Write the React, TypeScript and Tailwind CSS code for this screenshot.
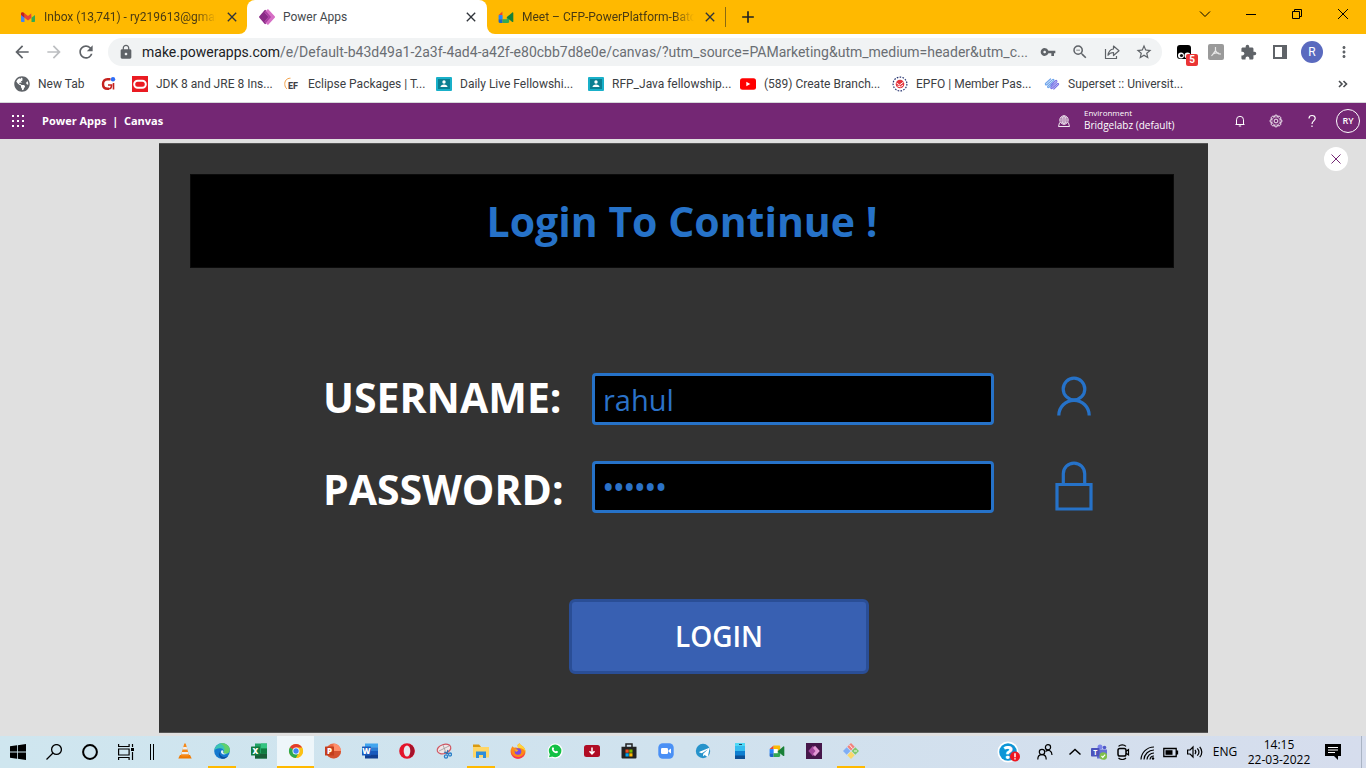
import { useState } from "react";
import type { ReactNode } from "react";
import {
  MdAdd,
  MdArrowBack,
  MdArrowForward,
  MdClose,
  MdExtension,
  MdLock,
  MdMoreVert,
  MdRefresh,
  MdStarBorder,
  MdVpnKey,
  MdZoomOut,
} from "react-icons/md";
import { FaGlobeAmericas, FaTelegramPlane } from "react-icons/fa";

/* ---------- shared logos ---------- */

function GmailLogo() {
  return (
    <svg viewBox="0 0 16 16" className="size-4 shrink-0" aria-hidden="true">
      <path d="M1 4v8.200c0 .5.4.8.8.8H4.500V6.800z" fill="#4285f4" />
      <path d="M15 4v8.200c0 .5-.4.8-.8.8h-2.700V6.800z" fill="#34a853" />
      <path d="M4.500 8.800V4.300L8 7l3.500-2.700v4.500L8 11.400z" fill="#ea4335" />
      <path d="M1 4.300v1.600l3.500 2.900V4.300l-1-.8C2.500 2.800 1 3.300 1 4.300z" fill="#c5221f" />
      <path d="M15 4.300v1.600l-3.500 2.900V4.300l1-.8c1-.7 2.500-.2 2.500.8z" fill="#fbbc04" />
    </svg>
  );
}

function PowerAppsLogo({ className }: { className: string }) {
  return (
    <svg viewBox="0 0 16 16" className={className} aria-hidden="true">
      <path d="M5.500 1.200a.9.900 0 0 1 1.300 0L10 8l-3.200 6.800a.9.900 0 0 1-1.300 0L.4 8.700a1 1 0 0 1 0-1.400z" fill="#8a2b86" />
      <path d="M8.200.5a.9.900 0 0 1 1.300 0l6.200 6.800a1 1 0 0 1 0 1.400l-6.200 6.800a.9.900 0 0 1-1.300 0L5.500 12.500 9.500 8l-4-4.500z" fill="#d66fc5" />
      <path d="M6.800 2 12 8l-5.200 6-1.300-1.500L9.500 8l-4-4.500z" fill="#a83fa1" />
    </svg>
  );
}

function MeetShapes() {
  return (
    <>
      <path d="M4.600 2.400v3.700H.6z" fill="#ea4335" />
      <path d="M4.600 2.400H10c.7 0 1.200.4 1.200 1.100v3l-2.400 2V6.100H4.600z" fill="#fbbc04" />
      <path d="M.6 6.100h4v4.200h-4z" fill="#2684fc" />
      <path d="M.6 10.300h4v3.600H1.800c-.7 0-1.200-.5-1.200-1.100z" fill="#1a66ca" />
      <path d="M4.600 10.300h4.200V8.200l2.400-2v6.600c0 .7-.5 1.100-1.200 1.100H4.600z" fill="#34a853" />
      <path d="M8.800 8.200 14.300 3.500c.5-.4 1-.1 1 .5v8.400c0 .6-.5.9-1 .5L8.800 8.400z" fill="#188038" />
    </>
  );
}

/* ---------- browser ---------- */

function CloseTab({ label }: { label: string }) {
  return (
    <button aria-label={`Close ${label}`} className="flex size-4 shrink-0 items-center justify-center text-[#30343a]">
      <MdClose className="size-4" />
    </button>
  );
}

function TabStrip() {
  return (
    <div className="flex h-[34px] items-stretch bg-white">
      <div className="flex w-[247px] shrink-0 items-center gap-2 rounded-br-lg bg-[#ffb900] pr-[7px] pl-5">
        <GmailLogo />
        <span className="min-w-0 flex-1 overflow-hidden whitespace-nowrap text-[#4a3b12] [mask-image:linear-gradient(to_right,black_88%,transparent)]">
          Inbox (13,741) - ry219613@gmai
        </span>
        <CloseTab label="Inbox" />
      </div>
      <div className="w-60 shrink-0 bg-[#ffb900]">
        <div className="flex h-full items-center gap-2 rounded-t-lg bg-white pr-2 pl-3">
          <PowerAppsLogo className="size-4 shrink-0" />
          <span className="flex-1 text-[#45494d]">Power Apps</span>
          <CloseTab label="Power Apps" />
        </div>
      </div>
      <div className="flex flex-1 items-center rounded-bl-lg bg-[#ffb900]">
        <div className="flex h-5 w-[239px] items-center gap-2 border-r border-[#8a6a10] pr-[7px] pl-[11px]">
          <svg viewBox="0 0 16 16" className="size-4 shrink-0" aria-hidden="true">
            <MeetShapes />
          </svg>
          <span className="min-w-0 flex-1 overflow-hidden whitespace-nowrap text-[#4a3b12] [mask-image:linear-gradient(to_right,black_88%,transparent)]">
            Meet – CFP-PowerPlatform-Batch
          </span>
          <CloseTab label="Meet" />
        </div>
        <button aria-label="New tab" className="ml-3 text-[#222]">
          <MdAdd className="size-5" />
        </button>
        <div className="ml-auto flex h-7 self-start text-black">
          <button aria-label="Search tabs" className="flex w-[46px] items-center justify-center">
            <svg viewBox="0 0 12 12" className="size-3" fill="none" stroke="currentColor">
              <path d="m1 3.500 5 5 5-5" />
            </svg>
          </button>
          <button aria-label="Minimize" className="flex w-[46px] items-center justify-center">
            <svg viewBox="0 0 10 10" className="size-2.5" stroke="currentColor">
              <path d="M0 5.500h10" />
            </svg>
          </button>
          <button aria-label="Restore" className="flex w-[46px] items-center justify-center">
            <svg viewBox="0 0 10 10" className="size-2.5" fill="none" stroke="currentColor">
              <path d="M.5 2.500h7v7h-7zM2.500 2.500v-2h7v7h-2" />
            </svg>
          </button>
          <button aria-label="Close window" className="flex w-[46px] items-center justify-center">
            <svg viewBox="0 0 10 10" className="size-2.5" fill="none" stroke="currentColor">
              <path d="m0 0 10 10M10 0 0 10" />
            </svg>
          </button>
        </div>
      </div>
    </div>
  );
}

function ToolButton({ label, children }: { label: string; children: ReactNode }) {
  return (
    <button aria-label={label} className="flex size-8 shrink-0 items-center justify-center text-[#5f6368]">
      {children}
    </button>
  );
}

function Toolbar() {
  return (
    <div className="flex h-9 items-center bg-white px-1.5">
      <ToolButton label="Back">
        <MdArrowBack className="size-5" />
      </ToolButton>
      <ToolButton label="Forward">
        <MdArrowForward className="size-5 text-[#bcbec1]" />
      </ToolButton>
      <ToolButton label="Reload">
        <MdRefresh className="size-5" />
      </ToolButton>
      <div className="ml-1.5 flex h-7 min-w-0 flex-1 items-center rounded-full bg-[#f1f3f4] pr-0.5 pl-2.5">
        <MdLock className="size-4 shrink-0 text-[#5f6368]" />
        <p className="ml-2 min-w-0 flex-1 overflow-hidden text-sm whitespace-nowrap text-[#6a6e73]">
          <span className="text-[#202124]">make.powerapps.com</span>
          /e/Default-b43d49a1-2a3f-4ad4-a42f-e80cbb7d8e0e/canvas/?utm_source=PAMarketing&amp;utm_medium=header&amp;utm_c...
        </p>
        <ToolButton label="Saved passwords">
          <MdVpnKey className="size-4" />
        </ToolButton>
        <ToolButton label="Zoom">
          <MdZoomOut className="size-[18px]" />
        </ToolButton>
        <ToolButton label="Share">
          <svg viewBox="0 0 16 16" className="size-4" fill="none" stroke="currentColor" strokeWidth="1.200">
            <path d="M1.500 5v9.500h11V12M9.500 5V2l5.500 4.800-5.500 4.700V8.500c-2.500 0-4.300.8-5.500 2.800C4.500 7.500 6.500 5.300 9.500 5z" strokeLinejoin="round" />
          </svg>
        </ToolButton>
        <ToolButton label="Bookmark this page">
          <MdStarBorder className="size-[18px]" />
        </ToolButton>
      </div>
      <div className="ml-1.5 flex">
        <button aria-label="Tampermonkey, 5 scripts" className="relative flex size-8 items-center justify-center">
          <svg viewBox="0 0 16 16" className="size-4">
            <rect x="1" y="1" width="14" height="14" rx="3" fill="#000" />
            <circle cx="5" cy="11.500" r="3" fill="#fff" />
            <circle cx="11.500" cy="11.500" r="3" fill="#fff" />
            <circle cx="5.500" cy="11.500" r="1.600" fill="#111" />
          </svg>
          <span className="absolute right-0.5 bottom-0.5 flex size-3 items-center justify-center rounded-xs bg-[#ea3535] text-[10px] font-bold text-white">
            5
          </span>
        </button>
        <ToolButton label="Acrobat">
          <svg viewBox="0 0 16 16" className="size-4">
            <rect width="16" height="16" rx="2" fill="#9a9a9a" />
            <path d="M7.500 3v3.500L3.500 12M7.500 6.500c1 2.500 2.500 3.500 5.500 3.500M5 10c2-1.500 3.500-1.500 6-1" fill="none" stroke="#e8e8e8" strokeWidth="1.200" />
          </svg>
        </ToolButton>
        <ToolButton label="Extensions">
          <MdExtension className="size-[17px]" />
        </ToolButton>
        <ToolButton label="Side panel">
          <svg viewBox="0 0 14 14" className="size-3.5" fill="none">
            <path d="M1 1h12v12H1z" stroke="currentColor" strokeWidth="2" />
            <path d="M9 1h4v12H9z" fill="currentColor" />
          </svg>
        </ToolButton>
        <ToolButton label="Profile">
          <span className="flex size-[22px] items-center justify-center rounded-full bg-[#5a6abf] text-xs text-white">R</span>
        </ToolButton>
        <ToolButton label="Chrome menu">
          <MdMoreVert className="size-[18px]" />
        </ToolButton>
      </div>
    </div>
  );
}

function ClassroomLogo() {
  return (
    <svg viewBox="0 0 16 16" className="size-4 shrink-0">
      <rect y="1" width="16" height="14" rx="1" fill="#19b0c9" />
      <rect x="2" y="3" width="12" height="10" fill="#0b7f92" />
      <circle cx="8" cy="6" r="1.700" fill="#fff" />
      <path d="M4.500 11c0-1.800 1.500-2.600 3.500-2.600s3.500.8 3.500 2.600z" fill="#fff" />
    </svg>
  );
}

const bookmarks: { title: string; icon: ReactNode }[] = [
  {
    title: "JDK 8 and JRE 8 Ins...",
    icon: (
      <svg viewBox="0 0 16 16" className="size-4 shrink-0">
        <rect width="16" height="16" fill="#ea1b22" />
        <rect x="2.200" y="4.700" width="11.600" height="7" rx="3.500" fill="none" stroke="#fff" strokeWidth="2" />
      </svg>
    ),
  },
  {
    title: "Eclipse Packages | T...",
    icon: (
      <svg viewBox="0 0 16 16" className="size-4 shrink-0">
        <path d="M6.500 2.200C2.500 2.200.5 5 .8 8.500c.1 2 1 3.500 2.200 4.500" fill="none" stroke="#f3a24a" strokeWidth="1" />
        <text x="4" y="13" fontSize="9" fontWeight="800" fill="#3f3f46">
          EF
        </text>
      </svg>
    ),
  },
  { title: "Daily Live Fellowshi...", icon: <ClassroomLogo /> },
  { title: "RFP_Java fellowship...", icon: <ClassroomLogo /> },
  {
    title: "(589) Create Branch...",
    icon: (
      <svg viewBox="0 0 16 16" className="size-4 shrink-0">
        <rect y="2.300" width="16" height="11.400" rx="2.500" fill="#f00" />
        <path d="M6.300 5.700v4.600L10.300 8z" fill="#fff" />
      </svg>
    ),
  },
  {
    title: "EPFO | Member Pas...",
    icon: (
      <svg viewBox="0 0 16 16" className="size-4 shrink-0">
        <circle cx="8" cy="8" r="6.900" fill="none" stroke="#25336f" strokeWidth="1.200" strokeDasharray="1.600 1.300" />
        <circle cx="8" cy="8" r="4.300" fill="#e5343c" />
        <path d="m4.500 7 3 2 4-3M5.500 10l3 .8L11 9" stroke="#fff" strokeWidth="1" fill="none" />
      </svg>
    ),
  },
  {
    title: "Superset :: Universit...",
    icon: (
      <svg viewBox="0 0 16 16" className="size-4 shrink-0" fill="none" strokeWidth="1.200" strokeLinecap="round" strokeLinejoin="round">
        <path d="M6.500 3 1.800 7.200c-1 1 0 2.300 1 1.500L8.500 3.600c1-.8 2 .4 1 1.300L4 10c-1 1 0 2 1 1.200l4-3.700" stroke="#6fa5ec" />
        <path d="m7 9 4.500-4.200c1-.8 2 .3 1 1.300L7.200 11c-1 1 0 2.200 1 1.300l5-4.600c1-.8 2 .2 1 1.200L9.800 13" stroke="#7b74e6" />
      </svg>
    ),
  },
];

function BookmarksBar() {
  return (
    <nav aria-label="Bookmarks" className="flex h-[33px] items-center border-b border-[#d6d6da] bg-white pb-1 pl-3.5 text-[#3c4043]">
      <a href="#new-tab" className="flex w-[86px] shrink-0 items-center gap-2 whitespace-nowrap">
        <FaGlobeAmericas className="size-4 shrink-0 text-[#5f6368]" />
        New Tab
      </a>
      <a href="#c" aria-label="CodinGame" className="w-8 shrink-0">
        <svg viewBox="0 0 16 16" className="size-4" fill="none">
          <path d="M10.500 3.200H7.500C4.500 3.200 3 5 3 8s1.500 4.800 4.500 4.800H9" stroke="#c5221f" strokeWidth="2.400" />
          <path d="M8 9h3.500c0 2.500-.8 3.800-2.500 3.800M13.500 7v6.500" stroke="#c5221f" strokeWidth="1.600" />
          <circle cx="13" cy="3.200" r="2.200" fill="#2f6df6" />
        </svg>
      </a>
      {bookmarks.map((b) => (
        <a key={b.title} href="#bookmark" className="flex w-38 shrink-0 items-center gap-2 whitespace-nowrap">
          {b.icon}
          {b.title}
        </a>
      ))}
      <button aria-label="More bookmarks" className="mr-4.5 ml-auto">
        <svg viewBox="0 0 10 8" className="h-2 w-2.5" fill="none" stroke="#4a4d51" strokeWidth="1.600">
          <path d="m1 1 3 3-3 3M5.500 1l3 3-3 3" />
        </svg>
      </button>
    </nav>
  );
}

/* ---------- Power Apps ---------- */

const petals = [0, 45, 90, 135, 180, 225, 270, 315];

function AppHeader() {
  const dots = [0, 1, 2].flatMap((r) => [0, 1, 2].map((c) => [c * 5, r * 5]));
  return (
    <header className="flex h-9 items-center bg-[#742774] text-white">
      <button aria-label="App launcher" className="flex w-9 items-center justify-center">
        <svg viewBox="0 0 12 12" className="size-3" fill="currentColor">
          {dots.map(([x, y]) => (
            <rect key={`${x}-${y}`} x={x} y={y} width="2" height="2" />
          ))}
        </svg>
      </button>
      <h1 className="ml-1.5 text-[11px] font-bold whitespace-pre">Power Apps  |  Canvas</h1>
      <div className="ml-auto flex w-40 items-center gap-2">
        <svg viewBox="0 0 12 12" className="size-3" fill="none" stroke="currentColor" strokeWidth=".9">
          <circle cx="6" cy="5" r="4.200" />
          <path d="M6 .8v8.400M1.800 5h8.400M2.500 3h7M2.500 7h7" strokeWidth=".7" />
          <ellipse cx="6" cy="5" rx="2" ry="4.200" strokeWidth=".7" />
          <path d="M1.600 7.500.5 11.500h11l-1.100-4" />
        </svg>
        <div className="px-1.5">
          <p className="text-[8px] leading-2">Environment</p>
          <p className="text-[10px] leading-4">Bridgelabz (default)</p>
        </div>
      </div>
      <div className="ml-1 flex items-center">
        <button aria-label="Notifications" className="flex w-9 justify-center">
          <svg viewBox="0 0 12 12" className="size-3" fill="none" stroke="currentColor">
            <path d="M2.500 9.500V4.800a3.500 3.500 0 0 1 7 0v4.700M1.500 9.500h9M4.800 11h2.400" />
          </svg>
        </button>
        <button aria-label="Settings" className="flex w-9 justify-center">
          <svg viewBox="0 0 14 14" className="size-3.5" fill="none" stroke="currentColor" strokeWidth=".9">
            <circle cx="7" cy="7" r="1.900" />
            <circle cx="7" cy="7" r="4.200" strokeWidth=".6" />
            {petals.map((angle) => (
              <path key={angle} d="M5.200 2.900C5 .400 9 .400 8.800 2.900" transform={`rotate(${angle} 7 7)`} />
            ))}
          </svg>
        </button>
        <button aria-label="Help" className="flex w-9 justify-center">
          <svg viewBox="0 0 10 14" className="h-3.5 w-2.5" fill="none" stroke="currentColor" strokeWidth="1.200">
            <path d="M2 4.500C2 2.500 3.200 1.500 5 1.500s3.200 1 3.200 2.800C8.200 6.800 5 7 5 10M5 11.500V13" />
          </svg>
        </button>
        <button
          aria-label="Account"
          className="mx-1.5 flex size-6 items-center justify-center rounded-full border border-white text-[9px] font-semibold"
        >
          RY
        </button>
      </div>
    </header>
  );
}

function LoginApp() {
  const [user, setUser] = useState("rahul");
  const [password, setPassword] = useState("secret");
  return (
    <main className="flex flex-1 flex-col bg-[#e0e0e0] pt-1 pr-[158px] pb-[3px] pl-[159px]">
      <form
        onSubmit={(e) => e.preventDefault()}
        className="flex flex-1 flex-col border-y border-[#555] bg-[#333] pt-[30px]"
      >
        <h2 className="mr-[34px] ml-[31px] flex h-[94px] items-center justify-center border border-[#0b0b0b] bg-black text-[41px] font-bold text-[#2672c8]">
          Login To Continue !
        </h2>
        <div className="mt-[105px] grid grid-cols-[301px_1fr_160px] items-center gap-y-9 pr-[54px] pl-[132px]">
          <label htmlFor="username" className="pb-1 pl-8 text-[41px] leading-12 font-bold text-white">
            USERNAME:
          </label>
          <input
            id="username"
            value={user}
            onChange={(e) => setUser(e.target.value)}
            className="h-[52px] w-full rounded border-3 border-[#2672c8] bg-black px-2 text-[29px] text-[#2b72c8] outline-none"
          />
          <svg viewBox="0 0 40 52" className="h-[52px] w-10 justify-self-center" fill="none" stroke="#2672c8" strokeWidth="3.200">
            <circle cx="20" cy="16" r="10.800" />
            <path d="M4.800 42.500a15.200 15.200 0 0 1 30.400 0" />
          </svg>
          <label htmlFor="password" className="pt-1 pl-8 text-[41px] leading-12 font-bold text-white">
            PASSWORD:
          </label>
          <input
            id="password"
            type="password"
            value={password}
            onChange={(e) => setPassword(e.target.value)}
            className="h-[52px] w-full rounded border-3 border-[#2672c8] bg-black px-2 text-[28px] font-semibold text-[#2b72c8] outline-none"
          />
          <svg viewBox="0 0 40 52" className="h-[52px] w-10 justify-self-center" fill="none" stroke="#2672c8" strokeWidth="3.200">
            <path d="M3 23.500h34V48H3zM9.300 24V12.800a10.700 10.700 0 0 1 21.400 0V24" />
          </svg>
        </div>
        <button
          type="submit"
          className="mt-[86px] mr-[339px] ml-[410px] h-[75px] rounded-md border-3 border-[#2a4e96] bg-[#3860b2] text-[28px] font-semibold text-white"
        >
          LOGIN
        </button>
      </form>
    </main>
  );
}

/* ---------- Windows taskbar ---------- */

const taskIcons: { name: string; open?: boolean; active?: boolean; icon: ReactNode }[] = [
  {
    name: "VLC",
    icon: (
      <>
        <path d="M3 12h10l1.700 3.500H1.300z" fill="#f07a00" />
        <path d="M7.300.5h1.400l3.500 12.200c-2 1.200-6.400 1.200-8.400 0z" fill="#f58a1a" />
        <path d="M6.300 4h3.400l.7 2.500H5.600zM4.900 9h6.200l.6 2.200H4.300z" fill="#eee" />
      </>
    ),
  },
  {
    name: "Edge",
    open: true,
    icon: (
      <>
        <circle cx="8" cy="8" r="7.800" fill="#1479cf" />
        <path d="M.3 7.500C.8 3.500 4 .2 8 .2c4.500 0 7.800 3 7.800 6.500 0 2.500-2 4-4.300 4-1.500 0-2.300-.6-2-1.200.8-1.300.2-4-3-4.300C3.500 5 .8 6 .3 7.500z" fill="#3cc4b4" />
        <path d="M9 .3c4 .5 6.800 3.200 6.800 6.400 0 2.500-2 4-4.300 4-1.500 0-2-.5-2-1.200C12 6 10 2 6 .6 7 .2 8 .2 9 .3z" fill="#62d06a" />
        <path d="M5.500 8.500c-.5 3 2 6 6 5.500 1-.1 2.300-.8 3-1.500-1.500 2.500-4 3.500-6.500 3.300C5.500 14.500 4 11 5.500 8.500z" fill="#0b4f9e" />
        <path d="M9.300 8c.3 1-.5 1.300 0 1.900.5.7 2 1 3.200.7-2.500 2-6 .5-5.500-2C7.300 7 9 7 9.300 8z" fill="#dff1f8" />
      </>
    ),
  },
  {
    name: "Excel",
    icon: (
      <>
        <path d="M4 .5h12v15H4z" fill="#21a366" />
        <path d="M10 .5h6v5h-6z" fill="#33c481" />
        <path d="M4 10.500h12v5H4z" fill="#185c37" />
        <path d="M10 5.500h6v5h-6z" fill="#107c41" />
        <rect y="3.500" width="9" height="9" rx=".6" fill="#107c41" />
        <text x="4.500" y="11" fontSize="8" fontWeight="800" textAnchor="middle" fill="#fff">
          X
        </text>
      </>
    ),
  },
  {
    name: "Chrome",
    active: true,
    icon: (
      <>
        <circle cx="8" cy="8" r="7" fill="#fbc116" />
        <path d="M8 8 1.900 4.500A7 7 0 0 1 14.100 4.500z" fill="#e33b2e" />
        <path d="M1.900 4.500A7 7 0 0 0 8 15l3-5.500L8 8z" fill="#2da94f" />
        <path d="M8 4.500h6.100A7 7 0 0 1 8 15l3-5.300z" fill="#fbc116" />
        <circle cx="8" cy="8" r="3.500" fill="#fff" />
        <circle cx="8" cy="8" r="2.700" fill="#4285f4" />
      </>
    ),
  },
  {
    name: "PowerPoint",
    icon: (
      <>
        <circle cx="8.500" cy="8" r="7.500" fill="#ed6c47" />
        <path d="M8.500.5A7.500 7.500 0 0 1 16 8H8.500z" fill="#ff8f6b" />
        <path d="M16 8a7.500 7.500 0 0 1-14.500 2.500L8.500 8z" fill="#d35230" />
        <rect y="3.500" width="9" height="9" rx=".6" fill="#c43e1c" />
        <text x="4.500" y="11" fontSize="8" fontWeight="800" textAnchor="middle" fill="#fff">
          P
        </text>
      </>
    ),
  },
  {
    name: "Word",
    icon: (
      <>
        <path d="M3 .5h13v4H3z" fill="#41a5ee" />
        <path d="M3 4.300h13V8H3z" fill="#2b7cd3" />
        <path d="M3 8h13v4H3z" fill="#185abd" />
        <path d="M3 11.800h13v3.700H3z" fill="#103f91" />
        <rect y="3.500" width="9" height="9" rx=".6" fill="#185abd" />
        <text x="4.500" y="11" fontSize="8" fontWeight="800" textAnchor="middle" fill="#fff">
          W
        </text>
      </>
    ),
  },
  {
    name: "Opera",
    icon: (
      <>
        <circle cx="8" cy="8" r="7.800" fill="#e3142a" />
        <path d="M11 1.500a7 7 0 0 1 0 13z" fill="#a5122a" />
        <ellipse cx="8" cy="8" rx="3.300" ry="5.600" fill="#e4e9ee" />
      </>
    ),
  },
  {
    name: "Snipping Tool",
    icon: (
      <>
        <ellipse cx="8" cy="6" rx="7" ry="4.500" fill="#f1e6e8" stroke="#d05560" strokeWidth="1.200" transform="rotate(-18 8 6)" />
        <path d="m3 8 10-5M7 2l3 8" stroke="#999" strokeWidth=".8" />
        <path d="m12 7-1.500 4M8 9l5 2" stroke="#2c6fb0" strokeWidth="1.200" />
        <circle cx="10" cy="13.500" r="1.600" fill="none" stroke="#2c7fc8" strokeWidth="1.300" />
        <circle cx="14" cy="11.500" r="1.500" fill="none" stroke="#2c7fc8" strokeWidth="1.300" />
      </>
    ),
  },
  {
    name: "File Explorer",
    open: true,
    icon: (
      <>
        <path d="M0 1.500h6l1.500 1.700V6H0z" fill="#d99a12" />
        <path d="M0 4h16v10.500H0z" fill="#ffd666" />
        <path d="M3 8.500h10V15h-3v-3H6v3H3z" fill="#2f8edb" />
      </>
    ),
  },
  {
    name: "Firefox",
    icon: (
      <>
        <path d="M8 15.700A7.300 7.300 0 0 1 1 6c.3-1 1-2 1.500-2.700L4 4.800c1.500-.5 3-.3 4 .2L7.500 2 9.500.2c.5 1.500 2 2 3.500 3.300 1.500 1.500 2.500 3 2.500 5.200 0 4-3.400 7-7.500 7z" fill="#ff8a16" />
        <path d="M9.500.2c.5 1.500 2 2 3.500 3.300 1.500 1.500 2.500 3 2.500 5.200C13.500 5 10 5 8 5L7.500 2z" fill="#ffd43a" />
        <path d="M1 6c-.3 5 3 8 7 8s6-2.500 6.500-5c.8 3-2 6.700-6.500 6.700S.5 12 1 6z" fill="#f7325f" />
        <circle cx="8" cy="8.500" r="3.300" fill="#7b4be0" />
        <path d="M4.500 6.500c1.500-.5 3 .2 3.800 1L6 9z" fill="#ffb01c" />
      </>
    ),
  },
  {
    name: "WhatsApp",
    icon: (
      <>
        <path d="M.5 15.500 1.600 11.500A7.500 7.500 0 1 1 4.600 14.500z" fill="#fff" />
        <circle cx="8.100" cy="7.900" r="6.300" fill="#12c144" />
        <path d="M2 14.200 3 10.500l2.500 3z" fill="#12c144" />
        <path d="M5.400 4.500c.7-.7 1.200-.2 1.700 1.200-.6.7-.5 1 .2 1.700.8.9 1.400 1.100 2.200.3 1.400.5 2 1 1.300 1.800-2.500 2.400-7.600-2.400-5.400-5z" fill="#fff" />
      </>
    ),
  },
  {
    name: "Downloader",
    icon: (
      <>
        <rect y="2" width="16" height="12" rx="2.500" fill="#b00c24" />
        <path d="M8 4.500v6.300M5.500 8.200 8 10.800l2.500-2.600" fill="none" stroke="#fff" strokeWidth="1.500" />
      </>
    ),
  },
  {
    name: "Microsoft Store",
    icon: (
      <>
        <path d="M5 4V1h6v3" fill="none" stroke="#222" strokeWidth="1.500" />
        <path d="M.5 3.800h15v10.700a1 1 0 0 1-1 1h-13a1 1 0 0 1-1-1z" fill="#222" />
        <path d="M4.500 6.500h3.200v3.200H4.500z" fill="#f25022" />
        <path d="M8.300 6.500h3.200v3.200H8.300z" fill="#7fba00" />
        <path d="M4.500 10.300h3.200v3.200H4.500z" fill="#00a4ef" />
        <path d="M8.300 10.300h3.200v3.200H8.300z" fill="#ffb900" />
      </>
    ),
  },
  {
    name: "Zoom",
    icon: (
      <>
        <rect x=".3" y=".3" width="15.400" height="15.400" rx="4.500" fill="#4a90f5" />
        <rect x="3" y="5" width="7" height="6" rx="1.300" fill="#fff" />
        <path d="M10.500 7.300 13 5.500v5l-2.500-1.800z" fill="#fff" />
      </>
    ),
  },
  {
    name: "Telegram",
    icon: (
      <>
        <circle cx="8" cy="8" r="7.200" fill="#2693cb" />
        <FaTelegramPlane x="3.300" y="3.500" width="9" height="9" color="#fff" />
      </>
    ),
  },
  {
    name: "Your Phone",
    icon: (
      <>
        <path d="M3 0h10v16H3z" fill="#0f7fd0" />
        <path d="M3 0h10v3H3z" fill="#4fd8f5" />
        <path d="M3 3h10v5H3z" fill="#35bdf0" />
        <path d="M3 12.500h10V16H3z" fill="#0d4f94" />
        <path d="M7 1.500h3" stroke="#124" strokeWidth=".8" />
      </>
    ),
  },
  {
    name: "Google Meet",
    icon: (
      <>
        <path d="M4.600 6.100h4.200v4.200H4.600z" fill="#fff" />
        <MeetShapes />
      </>
    ),
  },
  {
    name: "Power Apps",
    icon: (
      <>
        <path d="M0 0h16v16H0z" fill="#46174a" />
        <path d="m7 2.800 4.500 5.200L7 13.200 2.300 8z" fill="#a4479c" />
        <path d="M9 2.800 13.800 8 9 13.200 7 11l2.500-3L7 5z" fill="#e59ad6" />
      </>
    ),
  },
  {
    name: "Git Bash",
    open: true,
    icon: (
      <>
        <path d="m8 0 3.700 3.700L8 7.400 4.300 3.700z" fill="#f4817c" />
        <path d="m3.700 4.300 3.700 3.700-3.700 3.700L0 8z" fill="#80aef5" />
        <path d="m12.300 4.300 3.700 3.700-3.700 3.700L8.600 8z" fill="#7fc96c" />
        <path d="m8 8.600 3.700 3.700L8 16l-3.700-3.700z" fill="#fbd869" />
        <path d="m6.500 2 3 3.500M11 8h3" stroke="#fff" strokeWidth=".9" />
      </>
    ),
  },
];

function SystemButton({ label, children }: { label: string; children: ReactNode }) {
  return (
    <button aria-label={label} className="flex w-9 items-center justify-center">
      {children}
    </button>
  );
}

function TrayButton({ label, children }: { label: string; children: ReactNode }) {
  return (
    <button aria-label={label} className="flex w-6 shrink-0 items-center justify-center">
      <svg viewBox="0 0 16 16" className="size-4" fill="none" stroke="#000" strokeWidth="1.200">
        {children}
      </svg>
    </button>
  );
}

function Taskbar() {
  return (
    <footer className="flex h-8 bg-linear-to-r from-[#cfe6ef] via-[#d0e2ee] to-[#d6dded] text-black">
      <SystemButton label="Start">
        <svg viewBox="0 0 16 16" className="size-4">
          <path d="M0 2.300 7 1.300v6.300H0zM7.800 1.200 16 0v7.600H7.800zM0 8.400h7v6.300l-7-1zM7.800 8.400H16V16l-8.200-1.200z" />
        </svg>
      </SystemButton>
      <SystemButton label="Search">
        <svg viewBox="0 0 16 16" className="size-4" fill="none" stroke="#000" strokeWidth="1.300">
          <circle cx="10.500" cy="5.500" r="4.900" />
          <path d="M7 9 .5 15.500" />
        </svg>
      </SystemButton>
      <SystemButton label="Cortana">
        <svg viewBox="0 0 16 16" className="size-4" fill="none" stroke="#000" strokeWidth="2">
          <circle cx="8" cy="8" r="6.900" />
        </svg>
      </SystemButton>
      <SystemButton label="Task view">
        <svg viewBox="0 0 16 16" className="size-4" fill="none" stroke="#000" strokeWidth="1.200">
          <path d="M.6 0v2.500h10.500V0M.6 5h10.500v6H.6zM.6 16v-2.500h10.500V16M14.500 0v3M14.500 8v8" />
          <path d="M13 4h3v3h-3z" fill="#000" stroke="none" />
        </svg>
      </SystemButton>
      <div className="flex w-[22px] items-center pl-1.5" aria-hidden="true">
        <div className="h-4 w-1 border-x border-black" />
      </div>
      {taskIcons.map((t) => (
        <button
          key={t.name}
          aria-label={t.name}
          className={t.active ? "flex w-[37px] flex-col items-center bg-[#eef6fa]" : "flex w-[37px] flex-col items-center"}
        >
          <span className="flex flex-1 items-center">
            <svg viewBox="0 0 16 16" className="size-4" fill="none">
              {t.icon}
            </svg>
          </span>
          <span className={t.active ? "h-0.5 w-full bg-[#ffb900]" : t.open ? "h-0.5 w-7 bg-[#ffb900]" : "h-0.5 w-7"} />
        </button>
      ))}
      <div className="ml-auto flex items-stretch">
        <button aria-label="Get help" className="mr-3 flex items-center">
          <svg viewBox="0 0 24 22" className="h-[22px] w-6">
            <circle cx="11" cy="11" r="10.500" fill="#fff" />
            <circle cx="11" cy="11" r="8.800" fill="#0d95d6" />
            <text x="11" y="17.500" fontSize="18" fontWeight="800" textAnchor="middle" fill="#fff">
              ?
            </text>
            <circle cx="18" cy="15.500" r="5" fill="#ee1620" />
            <path d="M18 12.300v4M18 17.300v1.300" stroke="#fff" strokeWidth="1.500" />
          </svg>
        </button>
        <TrayButton label="People">
          <circle cx="5" cy="8" r="2.700" />
          <path d="M.8 15.500c0-3 1.700-4.800 4.200-4.800s4.200 1.800 4.200 4.800" />
          <circle cx="11" cy="3.300" r="2.600" />
          <path d="M8.500 7.500c3-2.500 6.500-.5 6.500 3.500" />
        </TrayButton>
        <div className="w-1.5" />
        <TrayButton label="Show hidden icons">
          <path d="m2.500 10.500 5.500-5 5.500 5" strokeWidth="1.500" />
        </TrayButton>
        <TrayButton label="Teams">
          <g stroke="none">
            <circle cx="9" cy="3" r="2.500" fill="#7b83eb" />
            <circle cx="13.500" cy="3.500" r="1.800" fill="#5059c9" />
            <path d="M6 5.500h10v5a4 4 0 0 1-4 4H6z" fill="#6670d6" />
            <rect y="4" width="8.500" height="8.500" rx=".8" fill="#4b53bc" />
            <circle cx="12.300" cy="12" r="3.800" fill="#7fbf4a" />
            <text x="4.200" y="11" fontSize="7" fontWeight="700" textAnchor="middle" fill="#fff">
              T
            </text>
          </g>
          <path d="m10.500 12 1.300 1.300 2.300-2.600" stroke="#fff" />
        </TrayButton>
        <TrayButton label="Meet Now">
          <rect x="3" y="4.500" width="8" height="7.500" rx="1.800" strokeWidth="1.500" />
          <path d="m11 7.300 2.500-1.600v5.100L11 9.200M3.500 2.300C5.500.3 9 .3 11 2.300M3.500 14c2 2 5.500 2 7.500 0" />
        </TrayButton>
        <TrayButton label="Network">
          <path d="M2 15.500A13 13 0 0 1 15 3M5 15.500A10 10 0 0 1 15 6M8 15.500A7 7 0 0 1 15 9M11 15.500A4 4 0 0 1 15 12" />
          <circle cx="14" cy="14.500" r="1.200" fill="#000" stroke="none" />
        </TrayButton>
        <TrayButton label="Battery">
          <path d="M.8 4.500h12.400v8H.8zM14.500 6.500v4" strokeWidth="1.300" />
          <path d="M2.500 6.200h7v4.600h-7z" fill="#000" stroke="none" />
        </TrayButton>
        <TrayButton label="Volume">
          <path d="M.6 6h2.500L6 3v10l-2.900-3H.6zM8 6c1 1.200 1 2.800 0 4M10.300 4.300c2 2.200 2 5.200 0 7.400M12.700 2.800c2.800 3 2.800 7.400 0 10.400" />
        </TrayButton>
        <button className="w-9 text-center text-xs">ENG</button>
        <button className="flex w-18 flex-col items-center justify-center text-xs leading-[15px]">
          <span>14:15</span>
          <span>22-03-2022</span>
        </button>
        <button aria-label="Action center" className="mr-5 ml-2.5 flex items-center">
          <svg viewBox="0 0 16 16" className="size-4">
            <path d="M0 0h16v12h-3v4l-4-4H0z" />
            <path d="M3 3.500h10M3 6h10M3 8.500h7" stroke="#fff" strokeWidth="1" />
          </svg>
        </button>
        <button aria-label="Show desktop" className="w-[5px] border-l border-[#aab4c4]" />
      </div>
    </footer>
  );
}

export default function App() {
  return (
    <div className="flex min-h-screen flex-col bg-[#e0e0e0] font-['Open_Sans','Noto_Sans',sans-serif] text-xs">
      <div className="font-['Roboto','Noto_Sans',sans-serif]">
        <TabStrip />
        <Toolbar />
        <BookmarksBar />
      </div>
      <AppHeader />
      <div className="relative flex flex-1 flex-col">
        <LoginApp />
        <button
          aria-label="Close preview"
          className="absolute top-2 right-[18px] flex size-6 items-center justify-center rounded-full bg-white text-[#742774]"
        >
          <svg viewBox="0 0 10 10" className="size-2.5" stroke="currentColor" fill="none">
            <path d="m.5.5 9 9M9.500.5l-9 9" />
          </svg>
        </button>
      </div>
      <Taskbar />
    </div>
  );
}
